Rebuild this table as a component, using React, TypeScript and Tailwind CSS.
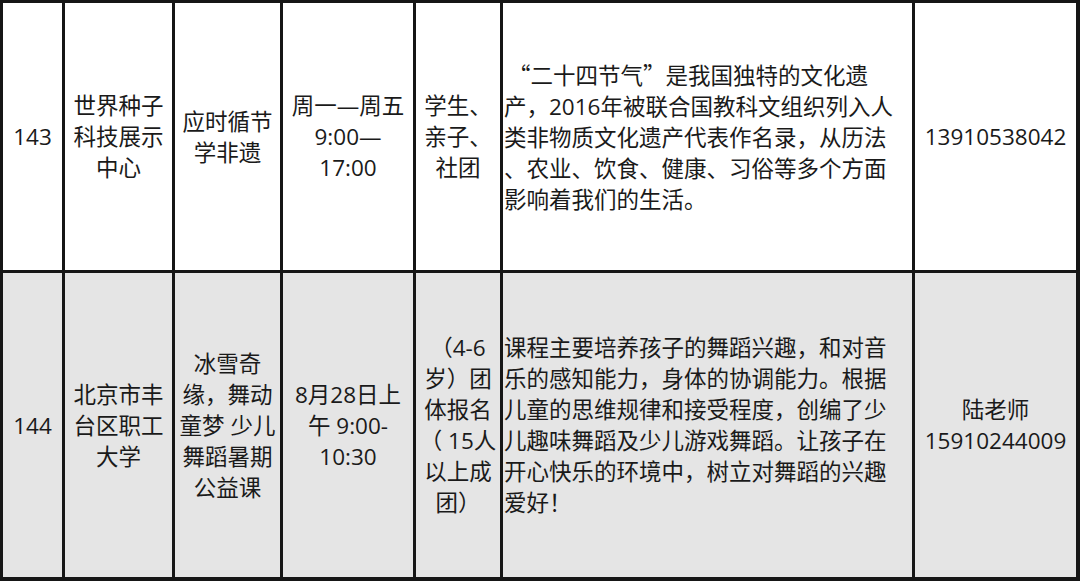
import React from "react";

function Cell({ bg, align = "center", children }: { bg: string; align?: "center" | "left"; children: React.ReactNode }) {
  return (
    <div
      className={`flex flex-col justify-center ${bg} ${align === "center" ? "items-center text-center" : "items-start text-left pl-[1px]"} text-[22.5px] leading-[31px] text-[#1a1a1a] whitespace-nowrap overflow-hidden`}
    >
      {children}
    </div>
  );
}

function Lines({ lines }: { lines: string[] }) {
  return (
    <div>
      {lines.map((l, i) => (
        <div key={i}>{l}</div>
      ))}
    </div>
  );
}

export default function App() {
  const w = "bg-white";
  const g = "bg-[#e5e5e5]";
  return (
    <div className="w-[1080px] h-[581px] bg-[#161616] pl-[3px] pr-[4px] pt-[3px] pb-[4px] font-['Open_Sans','Noto_Sans_CJK_SC',sans-serif]">
      <div className="grid grid-cols-[59px_107px_105px_130px_84px_409px_161px] grid-rows-[267px_304px] gap-[3px] h-full">
        <Cell bg={w}><Lines lines={["143"]} /></Cell>
        <Cell bg={w}><Lines lines={["世界种子", "科技展示", "中心"]} /></Cell>
        <Cell bg={w}><Lines lines={["应时循节", "学非遗"]} /></Cell>
        <Cell bg={w}><Lines lines={["周一—周五", "9:00—", "17:00"]} /></Cell>
        <Cell bg={w}><Lines lines={["学生、", "亲子、", "社团"]} /></Cell>
        <Cell bg={w} align="left">
          <div>
            <div className="pl-[4px]">
              <span className="font-['Noto_Sans_CJK_SC',sans-serif]">“</span>二十四节气<span className="font-['Noto_Sans_CJK_SC',sans-serif]">”</span>是我国独特的文化遗
            </div>
            <div>产，2016年被联合国教科文组织列入人</div>
            <div>类非物质文化遗产代表作名录，从历法</div>
            <div>、农业、饮食、健康、习俗等多个方面</div>
            <div>影响着我们的生活。</div>
          </div>
        </Cell>
        <Cell bg={w}><Lines lines={["13910538042"]} /></Cell>

        <Cell bg={g}><Lines lines={["144"]} /></Cell>
        <Cell bg={g}><Lines lines={["北京市丰", "台区职工", "大学"]} /></Cell>
        <Cell bg={g}><Lines lines={["冰雪奇", "缘，舞动", "童梦 少儿", "舞蹈暑期", "公益课"]} /></Cell>
        <Cell bg={g}><Lines lines={["8月28日上", "午 9:00-", "10:30"]} /></Cell>
        <Cell bg={g}><Lines lines={["（4-6", "岁）团", "体报名", "（ 15人", "以上成", "团）"]} /></Cell>
        <Cell bg={g} align="left">
          <div>
            <div>课程主要培养孩子的舞蹈兴趣，和对音</div>
            <div>乐的感知能力，身体的协调能力。根据</div>
            <div>儿童的思维规律和接受程度，创编了少</div>
            <div>儿趣味舞蹈及少儿游戏舞蹈。让孩子在</div>
            <div>开心快乐的环境中，树立对舞蹈的兴趣</div>
            <div>爱好！</div>
          </div>
        </Cell>
        <Cell bg={g}><Lines lines={["陆老师", "15910244009"]} /></Cell>
      </div>
    </div>
  );
}
